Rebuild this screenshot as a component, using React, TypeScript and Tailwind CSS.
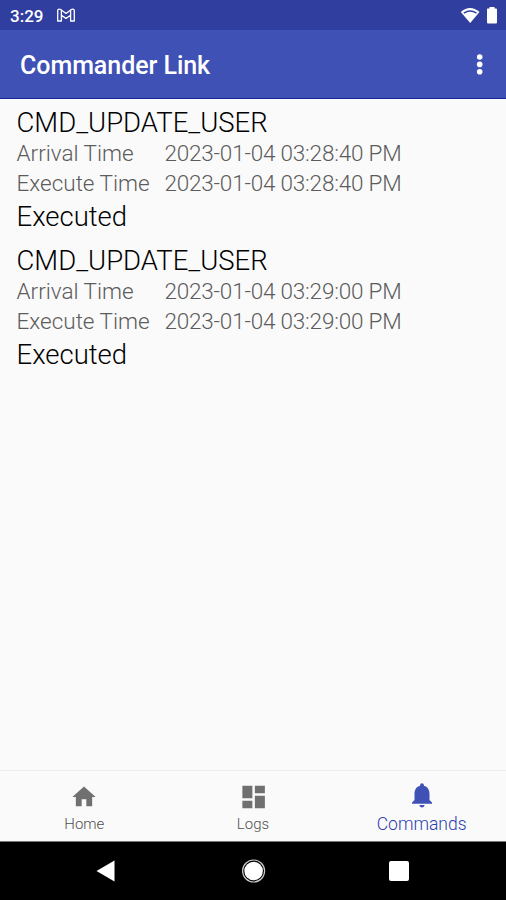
type Command = { name: string; arrival: string; execute: string; status: string };

const commands: Command[] = [
  { name: "CMD_UPDATE_USER", arrival: "2023-01-04 03:28:40 PM", execute: "2023-01-04 03:28:40 PM", status: "Executed" },
  { name: "CMD_UPDATE_USER", arrival: "2023-01-04 03:29:00 PM", execute: "2023-01-04 03:29:00 PM", status: "Executed" },
];

function StatusBar() {
  return (
    <div className="flex h-[30px] shrink-0 items-center bg-[#303f9f] pl-[10px] pr-[8px] text-white">
      <span className="w-[34px] whitespace-nowrap pt-[2px] text-[17px] leading-5 font-medium">3:29</span>
      <svg className="ml-[12px] h-[16px] w-[20px]" viewBox="0 0 20 16" fill="none" stroke="white" strokeWidth="1.3" strokeLinejoin="round">
        <path d="M1.700 3.200Q2.700 1.400 4.700 2.500L10 6.400L15.300 2.500Q17.300 1.400 18.300 3.200V14H14.600V8.200L10 11.400L5.400 8.200V14H1.700Z" />
        <path d="M5.400 8.200V3.200M14.600 8.200V3.200" />
      </svg>
      <svg className="ml-auto h-[17px] w-[20px]" viewBox="0 0 20 17">
        <path d="M.8 5Q10-3.200 19.500 5L10.200 16Z" fill="white" />
        <path d="M3.800 6.100Q10.200 1.900 16.500 6.100" fill="none" stroke="#303f9f" strokeWidth="1.300" />
      </svg>
      <svg className="ml-[6px] h-[18px] w-[12px]" viewBox="0 0 12 18">
        <path d="M1.500 2.500H3.500V1H8.500V2.500H10Q11 2.500 11 3.500V16.500Q11 17.500 10 17.500H2Q1 17.500 1 16.500V3.500Q1 2.500 1.500 2.500Z" fill="white" />
      </svg>
    </div>
  );
}

function AppBar() {
  return (
    <header className="flex h-[69px] shrink-0 items-center justify-between border-b border-[#1423a0] bg-[#3f51b5] pl-[20px] pr-[22px] text-white">
      <h1 className="pt-[4px] text-[25px] leading-[30px] font-medium tracking-[-0.05px]">Commander Link</h1>
      <svg className="h-[22px] w-[8px]" viewBox="0 0 8 22" fill="white">
        <circle cx="3.700" cy="4" r="2.800" />
        <circle cx="3.700" cy="11.400" r="2.800" />
        <circle cx="3.700" cy="18.800" r="2.800" />
      </svg>
    </header>
  );
}

function CommandItem({ command }: { command: Command }) {
  return (
    <li className="flex h-[138px] flex-col pl-[16.5px] pt-[8px]">
      <h2 className="h-[32px] text-[27.5px] leading-8 font-light text-black">{command.name}</h2>
      <dl className="grid grid-cols-[148px_1fr] text-[22.5px] leading-[29.5px] font-light text-[#5c5c5c]">
        <dt>Arrival Time</dt>
        <dd className="tracking-[-0.2px]">{command.arrival}</dd>
        <dt>Execute Time</dt>
        <dd className="tracking-[-0.2px]">{command.execute}</dd>
      </dl>
      <p className="pt-[3px] text-[27.5px] leading-8 font-light text-black">{command.status}</p>
    </li>
  );
}

function TabBar() {
  return (
    <nav className="grid h-[71px] shrink-0 grid-cols-3 border-t border-[#ededed] bg-[#fafafa] text-center text-[#707070]">
      <div className="flex flex-col items-center pt-[12px]">
        <svg className="h-[28px] w-[28px]" viewBox="0 0 24 24" fill="currentColor">
          <path d="M10 20v-6h4v6h5v-8h3L12 3 2 12h3v8z" />
        </svg>
        <span className="pt-[3px] text-[15px] leading-5 font-light text-[#505050]">Home</span>
      </div>
      <div className="flex flex-col items-center pt-[11px]">
        <svg className="h-[30px] w-[30px]" viewBox="-0.5 0 24 24" fill="currentColor">
          <path d="M3 13h8V3H3v10zm0 8h8v-6H3v6zm10 0h8V11h-8v10zm0-18v6h8V3h-8z" />
        </svg>
        <span className="pt-[2px] text-[15px] leading-5 font-light text-[#505050]">Logs</span>
      </div>
      <div className="flex flex-col items-center pt-[9px] text-[#3f51b5]">
        <svg className="h-[30px] w-[30px]" viewBox="0 0 24 24" fill="currentColor">
          <path d="M12 22c1.100 0 2-.9 2-2h-4c0 1.100.89 2 2 2zm6-6v-5c0-3.070-1.640-5.640-4.500-6.320V4c0-.83-.67-1.500-1.500-1.500s-1.500.67-1.500 1.500v.68C7.630 5.360 6 7.920 6 11v5l-2 2v1h16v-1l-2-2z" />
        </svg>
        <span className="pt-[4px] text-[17.500px] leading-5 font-light text-[#2c3fae]">Commands</span>
      </div>
    </nav>
  );
}

function SystemNav() {
  return (
    <div className="flex h-[58px] shrink-0 items-center bg-black pl-[96px]">
      <svg className="h-[22px] w-[19px]" viewBox="0 0 19 22" fill="white">
        <path d="M.5 11L18.500 .5V21.500Z" />
      </svg>
      <svg className="ml-[127px] h-[24px] w-[24px]" viewBox="0 0 24 24">
        <circle cx="11.600" cy="12" r="11" fill="none" stroke="#ccc" strokeWidth="1.200" />
        <circle cx="11.600" cy="12" r="9.300" fill="white" />
      </svg>
      <div className="ml-[123px] h-[20px] w-[20px] rounded-[2px] bg-white" />
    </div>
  );
}

export default function App() {
  return (
    <div className="flex h-[900px] w-[506px] flex-col overflow-hidden bg-[#fafafa] font-['Roboto',sans-serif]">
      <StatusBar />
      <AppBar />
      <main className="flex-1">
        <ul>
          {commands.map((command) => (
            <CommandItem key={command.arrival} command={command} />
          ))}
        </ul>
      </main>
      <TabBar />
      <div className="h-px shrink-0 bg-[#777]" />
      <SystemNav />
    </div>
  );
}
